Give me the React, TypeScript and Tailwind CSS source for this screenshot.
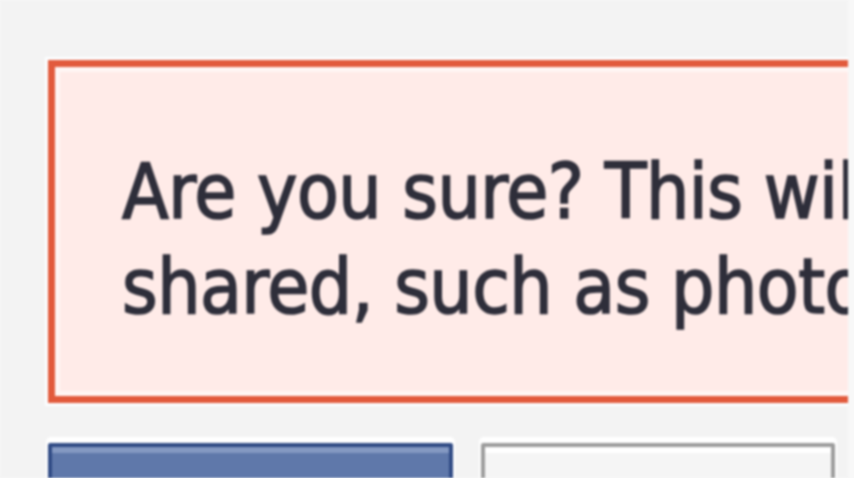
export default function App() {
  return (
    <div className="flex h-[478px] w-[854px] overflow-hidden bg-[#f8f8f8]">
      <div className="h-[478px] w-[848px] shrink-0 overflow-hidden bg-[#f3f3f3] pl-[48px] pt-[60px] blur-[1px]">
        {/* error box */}
        <div className="w-[880px] border-[7px] border-r-0 border-[#e25a3c] bg-[#ffebe8] pb-[62px] pl-[67px] pt-[77px] shadow-[0_0_0_3px_#fcfeff,inset_0_0_0_5px_#fff6f4]">
          <p
            className="whitespace-nowrap text-[76px] leading-[95px] tracking-[-0.5px] text-[#2e2e3a] [-webkit-text-stroke:1.6px_#2e2e3a]"
            style={{ fontFamily: '"DejaVu Sans Condensed", "DejaVu Sans", sans-serif' }}
          >
            Are you sure? This will remove everything you've
            <br />
            shared, such as photos, videos and posts.
          </p>
        </div>

        {/* buttons */}
        <div className="mt-[40px] flex gap-[28px]">
          <div className="h-[60px] w-[405px] shrink-0 rounded-t-[3px] border-[4px] border-b-0 border-[#2f4a84] bg-[#5f78aa] shadow-[0_-4px_0_2px_#ffffff,inset_0_6px_0_#8499c2]" />
          <div className="h-[60px] w-[354px] shrink-0 rounded-t-[3px] border-[4px] border-b-0 border-[#9c9c9c] bg-[#f5f5f5] shadow-[0_-4px_0_2px_#ffffff,inset_0_6px_0_#ffffff]" />
        </div>
      </div>
    </div>
  );
}
